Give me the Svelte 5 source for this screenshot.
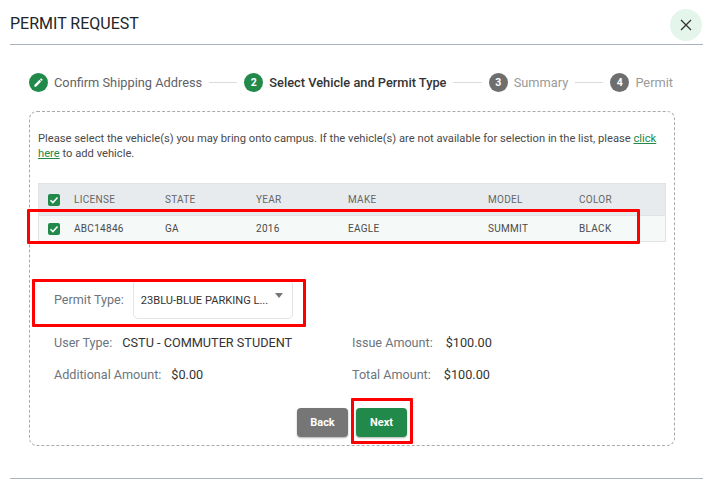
<script>
  const steps = [
    { label: 'Confirm Shipping Address', state: 'done' },
    { label: 'Select Vehicle and Permit Type', state: 'active', num: 2 },
    { label: 'Summary', state: 'todo', num: 3 },
    { label: 'Permit', state: 'todo', num: 4 }
  ];

  const columns = ['LICENSE', 'STATE', 'YEAR', 'MAKE', 'MODEL', 'COLOR'];
  const vehicle = ['ABC14846', 'GA', '2016', 'EAGLE', 'SUMMIT', 'BLACK'];
</script>

<div class="page">
  <header class="head">
    <h1>PERMIT REQUEST</h1>
    <button class="close" aria-label="Close">
      <svg width="14" height="14" viewBox="0 0 14 14"><path d="M2 2l10 10M12 2L2 12" stroke="#333" stroke-width="1.3" fill="none" /></svg>
    </button>
  </header>

  <div class="stepper">
    {#each steps as step, i}
      {#if i > 0}<span class="line"></span>{/if}
      <div class="step {step.state}">
        <span class="dot">
          {#if step.state === 'done'}
            <svg width="11" height="11" viewBox="0 0 24 24"><path fill="#fff" d="M3 17.25V21h3.75L17.81 9.94l-3.75-3.75L3 17.25zM20.71 7.04a1 1 0 0 0 0-1.41l-2.34-2.34a1 1 0 0 0-1.41 0l-1.83 1.83 3.75 3.75 1.83-1.83z" /></svg>
          {:else}
            {step.num}
          {/if}
        </span>
        <span class="label">{step.label}</span>
      </div>
    {/each}
  </div>

  <section class="card">
    <p class="intro">Please select the vehicle(s) you may bring onto campus. If the vehicle(s) are not available for selection in the list, please <a href="#add">click here</a> to add vehicle.</p>

    <div class="table">
      <div class="tr th">
        <span class="check"><svg width="10" height="10" viewBox="0 0 10 10"><path d="M1.5 5.2l2.4 2.4 4.6-5" stroke="#fff" stroke-width="1.5" fill="none" /></svg></span>
        {#each columns as col}<span>{col}</span>{/each}
      </div>
      <div class="tr td">
        <span class="check"><svg width="10" height="10" viewBox="0 0 10 10"><path d="M1.5 5.2l2.4 2.4 4.6-5" stroke="#fff" stroke-width="1.5" fill="none" /></svg></span>
        {#each vehicle as val}<span>{val}</span>{/each}
      </div>
    </div>

    <div class="permit">
      <span class="key">Permit Type:</span>
      <div class="select">
        <span>23BLU-BLUE PARKING L...</span>
        <i class="caret"></i>
      </div>
    </div>

    <div class="details">
      <div><span class="key">User Type:</span><b>CSTU - COMMUTER STUDENT</b></div>
      <div><span class="key">Issue Amount:</span><b class="wide">$100.00</b></div>
      <div><span class="key">Additional Amount:</span><b>$0.00</b></div>
      <div><span class="key">Total Amount:</span><b class="wide">$100.00</b></div>
    </div>

    <div class="actions">
      <button class="btn back">Back</button>
      <button class="btn next">Next</button>
    </div>

    <!-- red annotations drawn over the screenshot -->
    <span class="mark mark-row"></span>
    <span class="mark mark-select"></span>
    <span class="mark mark-next"></span>
  </section>

  <div class="foot"></div>
</div>

<style>
  :global(body) {
    margin: 0;
    background: #fff;
    font-family: Roboto, "Liberation Sans", sans-serif;
  }

  .page {
    width: 703px;
    height: 492px;
    overflow: hidden;
    box-sizing: border-box;
    padding-top: 8px;
  }

  .head {
    display: flex;
    align-items: center;
    justify-content: space-between;
    height: 36px;
    margin-left: 10px;
    border-bottom: 1px solid #a9b4bf;
  }

  h1 {
    margin: 0 0 6px;
    font-size: 16px;
    font-weight: 400;
    color: #212529;
  }

  .close {
    display: flex;
    align-items: center;
    justify-content: center;
    width: 32px;
    height: 32px;
    margin: 0 1px 3px 0;
    padding: 0;
    border: 0;
    border-radius: 50%;
    background: #e4f5ec;
  }

  .stepper {
    display: flex;
    align-items: center;
    height: 19px;
    margin: 28px 30px 0 29px;
  }

  .step {
    display: flex;
    align-items: center;
    gap: 6px;
    font-size: 12.8px;
    white-space: nowrap;
  }

  .dot {
    display: flex;
    align-items: center;
    justify-content: center;
    width: 19px;
    height: 19px;
    border-radius: 50%;
    background: #6e6e6e;
    color: #fff;
    font-size: 10.5px;
    font-weight: 700;
  }

  .done .dot,
  .active .dot {
    background: #218a4b;
  }

  .done .label {
    color: #5f6368;
  }

  .active .label {
    color: #333;
    font-weight: 500;
  }

  .todo .label {
    color: #9a9a9a;
  }

  .line {
    flex: 1;
    height: 1px;
    margin: 0 7px;
    background: #d9dcdf;
  }

  .card {
    position: relative;
    box-sizing: border-box;
    width: 646px;
    height: 335px;
    margin: 19px 0 0 29px;
    padding: 19px 8px 0;
    border: 1px dashed #aaa;
    border-radius: 8px;
  }

  .intro {
    margin: 0;
    font-size: 11.2px;
    line-height: 15px;
    color: #4a4a4a;
  }

  .intro a {
    color: #218a4b;
  }

  .table {
    width: 628px;
    margin-top: 22px;
    border: 1px solid #e0e2e5;
    font-size: 10px;
    letter-spacing: 0.3px;
    box-sizing: border-box;
  }

  .tr {
    display: grid;
    grid-template-columns: 35px 91px 91px 92px 140px 91px 1fr;
    align-items: center;
  }

  .th {
    box-sizing: border-box;
    height: 32px;
    background: #e8ebee;
    color: #666;
    border-bottom: 1px solid #e0e2e5;
  }

  .td {
    height: 25px;
    background: #f5f9f8;
    color: #4a4a4a;
  }

  .check {
    display: flex;
    align-items: center;
    justify-content: center;
    width: 12px;
    height: 12px;
    margin-left: 9px;
    border-radius: 2px;
    background: #218a4b;
  }

  .permit {
    display: flex;
    align-items: center;
    gap: 9px;
    margin: 37px 0 0 16px;
  }

  .key {
    color: #6c757d;
    font-size: 12.6px;
  }

  .select {
    display: flex;
    align-items: flex-start;
    justify-content: space-between;
    box-sizing: border-box;
    width: 160px;
    height: 40px;
    padding: 14px 9px 0 7px;
    border: 1px solid #e3e5e8;
    border-radius: 5px;
    font-size: 11.1px;
    color: #333;
  }

  .caret {
    width: 0;
    height: 0;
    margin-top: -1px;
    border: 4.5px solid transparent;
    border-top: 5px solid #777;
  }

  .details {
    display: grid;
    grid-template-columns: 298px 1fr;
    row-gap: 15px;
    margin: 15px 0 0 16px;
    line-height: 16px;
  }

  .details b {
    margin-left: 10px;
    font-size: 12.7px;
    font-weight: 400;
    color: #333;
  }

  .details b.wide {
    margin-left: 13px;
  }

  .actions {
    display: flex;
    justify-content: center;
    gap: 8px;
    margin-top: 25px;
  }

  .btn {
    width: 51px;
    height: 29px;
    padding: 0;
    border: 0;
    border-radius: 4px;
    color: #fff;
    font-family: inherit;
    font-size: 11px;
    font-weight: 700;
    box-shadow: 0 1px 2px rgba(0, 0, 0, 0.3);
  }

  .back {
    background: #767676;
  }

  .next {
    background: #218a4b;
  }

  .mark {
    position: absolute;
    box-sizing: border-box;
    border: 3px solid #f00;
    border-radius: 1px;
  }

  .mark-row {
    left: -3px;
    top: 97px;
    width: 613px;
    height: 35px;
  }

  .mark-select {
    left: 2px;
    top: 167px;
    width: 274px;
    height: 48px;
  }

  .mark-next {
    left: 321px;
    top: 286px;
    width: 62px;
    height: 46px;
  }

  .foot {
    margin: 32px 0 0 10px;
    border-top: 1px solid #a9b4bf;
  }
</style>
